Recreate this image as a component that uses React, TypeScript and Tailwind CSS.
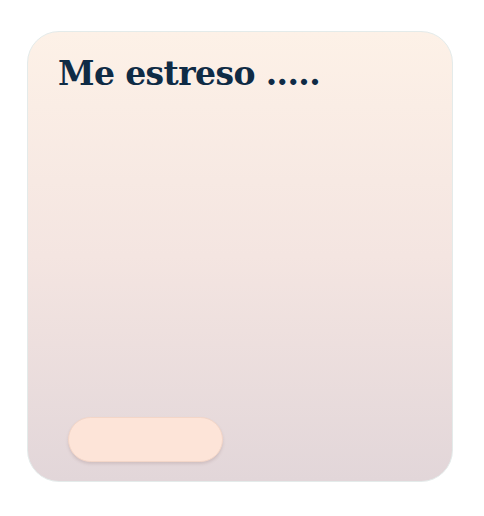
export default function App() {
  return (
    <div className="w-[484px] h-[516px] bg-white pl-[27px] pt-[31px]">
      <div className="w-[426px] h-[451px] rounded-[32px] border border-[#e4ebea] bg-gradient-to-b from-[#fdf1e7] via-[#f4e5e1] to-[#e2d6d9] flex flex-col justify-between pl-[30px] pr-6 pt-[22px] pb-[19px]">
        <h1 className="font-['DejaVu_Serif',serif] font-bold text-[33px] leading-[40px] text-[#0f2b45] tracking-[-0.6px]">
          Me estreso .....
        </h1>
        <button className="ml-[10px] w-[155px] h-[45px] rounded-full bg-[#fde4d8] border border-[#f3d6c8] shadow-[0_2px_3px_rgba(120,90,90,0.18)]" />
      </div>
    </div>
  );
}
